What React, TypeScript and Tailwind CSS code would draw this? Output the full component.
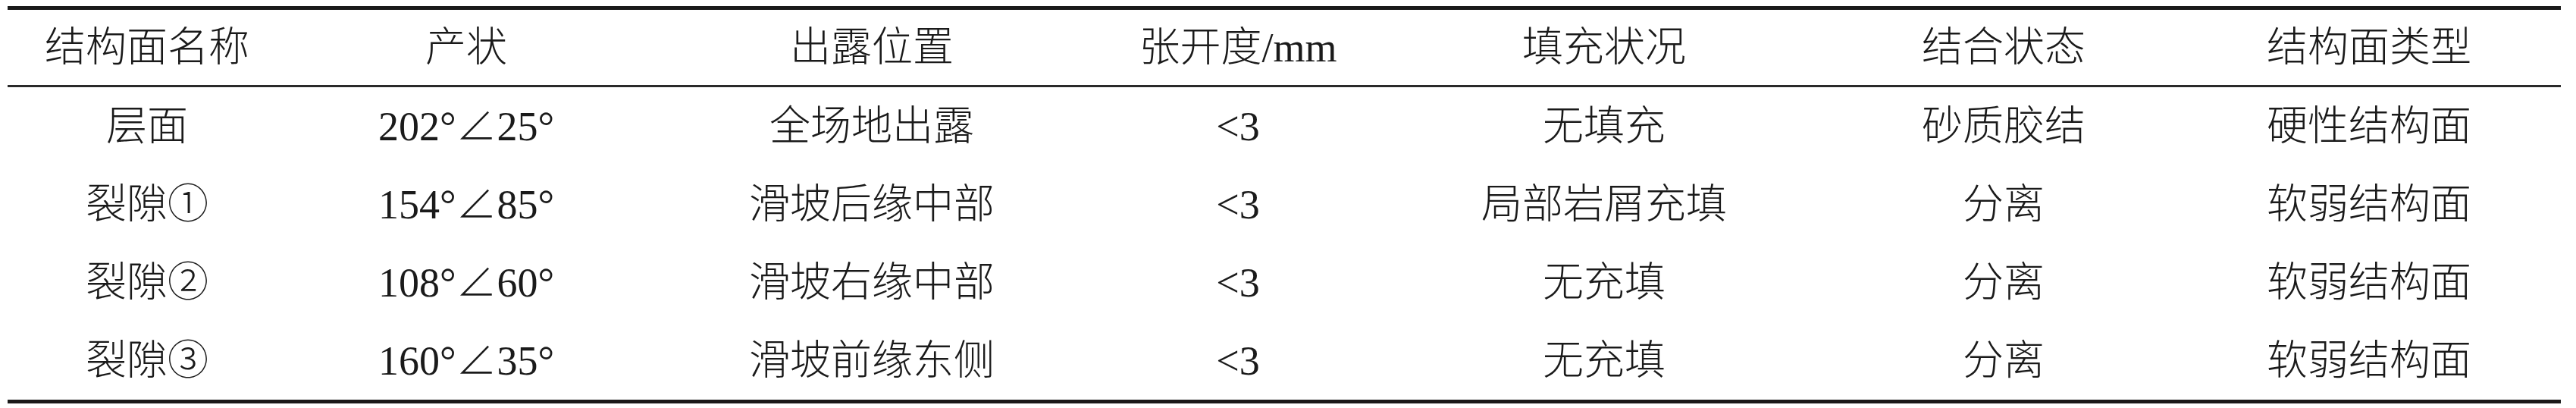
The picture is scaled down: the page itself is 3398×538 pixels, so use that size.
const headers = ["结构面名称", "产状", "出露位置", "张开度/mm", "填充状况", "结合状态", "结构面类型"];

const rows: string[][] = [
  ["层面", "202°∠25°", "全场地出露", "<3", "无填充", "砂质胶结", "硬性结构面"],
  ["裂隙①", "154°∠85°", "滑坡后缘中部", "<3", "局部岩屑充填", "分离", "软弱结构面"],
  ["裂隙②", "108°∠60°", "滑坡右缘中部", "<3", "无充填", "分离", "软弱结构面"],
  ["裂隙③", "160°∠35°", "滑坡前缘东侧", "<3", "无充填", "分离", "软弱结构面"],
];

const gridCols = "grid grid-cols-[368px_474px_596px_370px_596px_458px_506px]";

function Cell({ text }: { text: string }) {
  return <div className="flex items-center justify-center whitespace-nowrap">{text}</div>;
}

export default function App() {
  return (
    <div
      className="min-h-screen bg-white px-[10px] pt-[8px] text-[54px] font-light leading-none text-[#1a1a1a]"
      style={{ fontFamily: '"Liberation Serif", "Noto Sans CJK SC", serif' }}
    >
      <div className="w-[3368px] border-y-[5px] border-[#1a1a1a]">
        <div className={`${gridCols} h-[102px] border-b-[3px] border-[#2a2a2a]`}>
          {headers.map((h) => (
            <Cell key={h} text={h} />
          ))}
        </div>
        {rows.map((r, i) => (
          <div key={i} className={`${gridCols} h-[103px]`}>
            {r.map((c, j) => (
              <Cell key={j} text={c} />
            ))}
          </div>
        ))}
      </div>
    </div>
  );
}
